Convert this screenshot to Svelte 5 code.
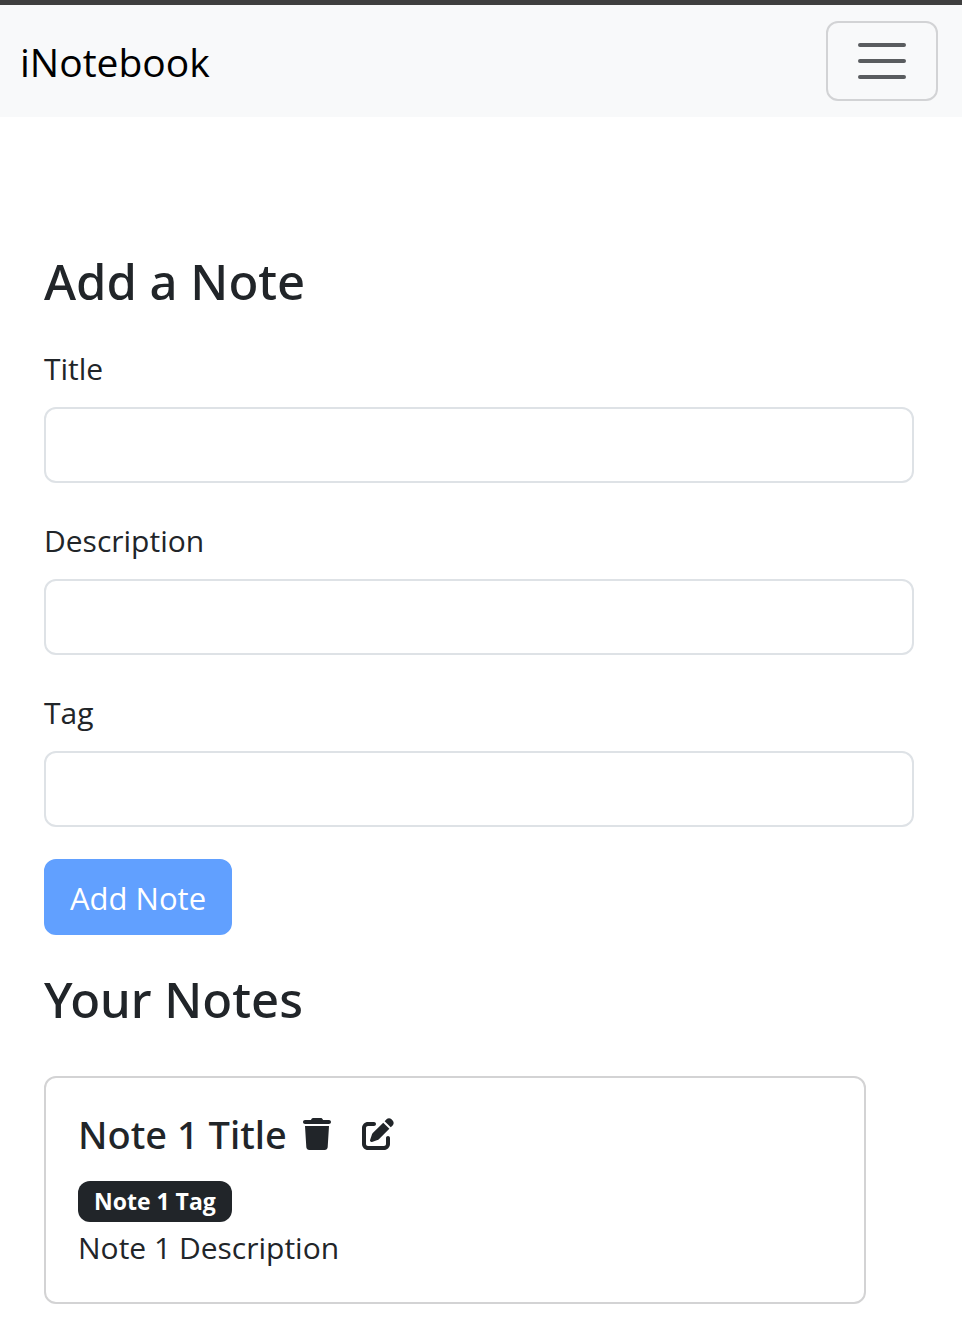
<script>
  let fields = $state([
    { id: 'title', label: 'Title', value: '' },
    { id: 'description', label: 'Description', value: '' },
    { id: 'tag', label: 'Tag', value: '' },
  ]);
  let notes = $state([
    { title: 'Note 1 Title', tag: 'Note 1 Tag', description: 'Note 1 Description' },
  ]);
  let ready = $derived(fields.every((f) => f.value.trim() !== ''));

  function addNote(event) {
    event.preventDefault();
    if (!ready) return;
    const [title, description, tag] = fields.map((f) => f.value);
    notes.push({ title, description, tag });
    fields.forEach((f) => (f.value = ''));
  }
</script>

<header>
  <nav>
    <a class="brand" href="#home">iNotebook</a>
    <button class="toggler" type="button" aria-label="Toggle navigation">
      <svg viewBox="0 0 30 30" width="60" height="60" aria-hidden="true">
        <path d="M4 7h22M4 15h22M4 23h22" />
      </svg>
    </button>
  </nav>
</header>

<main>
  <form onsubmit={addNote}>
    <h2>Add a Note</h2>
    {#each fields as field (field.id)}
      <div class="field">
        <label for={field.id}>{field.label}</label>
        <input id={field.id} type="text" bind:value={field.value} />
      </div>
    {/each}
    <button class="submit" class:ready type="submit">Add Note</button>
  </form>

  <section>
    <h2>Your Notes</h2>
    {#each notes as note, i}
      <article>
        <div class="heading">
          <h5>{note.title}</h5>
          <button class="icon" type="button" aria-label="Delete note" onclick={() => notes.splice(i, 1)}>
            <svg viewBox="0 0 448 512" width="28" height="32" aria-hidden="true">
              <path d="M135.2 17.7L128 32H32C14.3 32 0 46.3 0 64S14.3 96 32 96H416c17.7 0 32-14.3 32-32s-14.3-32-32-32H320l-7.2-14.3C307.4 6.8 296.3 0 284.2 0H163.8c-12.1 0-23.2 6.8-28.6 17.7zM416 128H32L53.2 467c1.6 25.3 22.6 45 47.9 45H346.9c25.3 0 46.3-19.7 47.9-45L416 128z" />
            </svg>
          </button>
          <button class="icon edit" type="button" aria-label="Edit note">
            <svg viewBox="0 0 512 512" width="32" height="32" aria-hidden="true">
              <path d="M471.6 21.7c-21.9-21.9-57.3-21.9-79.2 0L362.3 51.7l97.9 97.9 30.1-30.1c21.9-21.9 21.9-57.3 0-79.2L471.6 21.7zm-299.2 220c-6.1 6.1-10.8 13.6-13.5 21.9l-29.6 88.8c-2.9 8.6-.6 18.1 5.8 24.6s15.9 8.7 24.6 5.8l88.8-29.6c8.2-2.7 15.7-7.4 21.9-13.5L437.7 172.3 339.7 74.3 172.4 241.7zM96 64C43 64 0 107 0 160V416c0 53 43 96 96 96H352c53 0 96-43 96-96V320c0-17.7-14.3-32-32-32s-32 14.3-32 32v96c0 17.7-14.3 32-32 32H96c-17.7 0-32-14.3-32-32V160c0-17.7 14.3-32 32-32h96c17.7 0 32-14.3 32-32s-14.3-32-32-32H96z" />
            </svg>
          </button>
        </div>
        <span class="badge">{note.tag}</span>
        <p>{note.description}</p>
      </article>
    {/each}
  </section>
</main>

<style>
  :global(body) {
    background: #fff;
    color: #212529;
    font-family: "Open Sans", "Noto Sans", sans-serif;
    font-size: 30px;
    line-height: 48px;
  }
  header {
    border-top: 5px solid #3f3f3f;
    background: #f8f9fa;
  }
  nav {
    display: flex;
    align-items: center;
    justify-content: space-between;
    padding: 16px 24px 16px 20px;
  }
  .brand {
    padding-top: 2px;
    color: #000;
    font-size: 39px;
    line-height: 60px;
    text-decoration: none;
  }
  .toggler {
    display: flex;
    padding: 8px 24px;
    border: 2px solid #d2d3d5;
    border-radius: 12px;
    background: none;
  }
  .toggler path {
    fill: none;
    stroke: #595c5f;
    stroke-width: 2;
    stroke-linecap: round;
    stroke-miterlimit: 10;
  }
  main {
    padding: 132px 48px 28px 44px;
  }
  h2 {
    margin: 0;
    font-family: "Noto Sans", "Open Sans", sans-serif;
    font-size: 49px;
    font-weight: 500;
    line-height: 64px;
  }
  .field {
    display: flex;
    flex-direction: column;
    gap: 14px;
    margin-bottom: 34px;
  }
  form h2 {
    margin-bottom: 32px;
  }
  input {
    box-sizing: border-box;
    width: 100%;
    height: 76px;
    padding: 12px 24px;
    border: 2px solid #dee2e6;
    border-radius: 12px;
    background: #fff;
    color: inherit;
    font: inherit;
  }
  .submit {
    display: block;
    margin-top: -2px;
    padding: 13px 24px 11px;
    border: 2px solid #61a0ff;
    border-radius: 12px;
    background: #61a0ff;
    color: #fff;
    font: inherit;
    font-size: 31px;
  }
  .submit.ready {
    border-color: #0d6efd;
    background: #0d6efd;
  }
  section {
    margin-top: 32px;
  }
  article {
    margin: 45px 48px 0 0;
    padding: 30px 32px;
    border: 2px solid #d3d3d4;
    border-radius: 12px;
  }
  .heading {
    display: flex;
    align-items: center;
    margin-bottom: 21px;
  }
  h5 {
    margin: 0 16px 0 0;
    font-family: "Noto Sans", "Open Sans", sans-serif;
    font-size: 38px;
    font-weight: 500;
    line-height: 52px;
  }
  .icon {
    display: flex;
    padding: 0;
    border: 0;
    background: none;
  }
  .edit {
    margin-left: 31px;
  }
  .icon path {
    fill: #212529;
  }
  .badge {
    display: block;
    width: fit-content;
    padding: 8px 16px;
    border-radius: 12px;
    background: #212529;
    color: #fff;
    font-size: 23px;
    font-weight: 700;
    line-height: 25px;
  }
  p {
    margin: 2px 0 0;
  }
</style>
